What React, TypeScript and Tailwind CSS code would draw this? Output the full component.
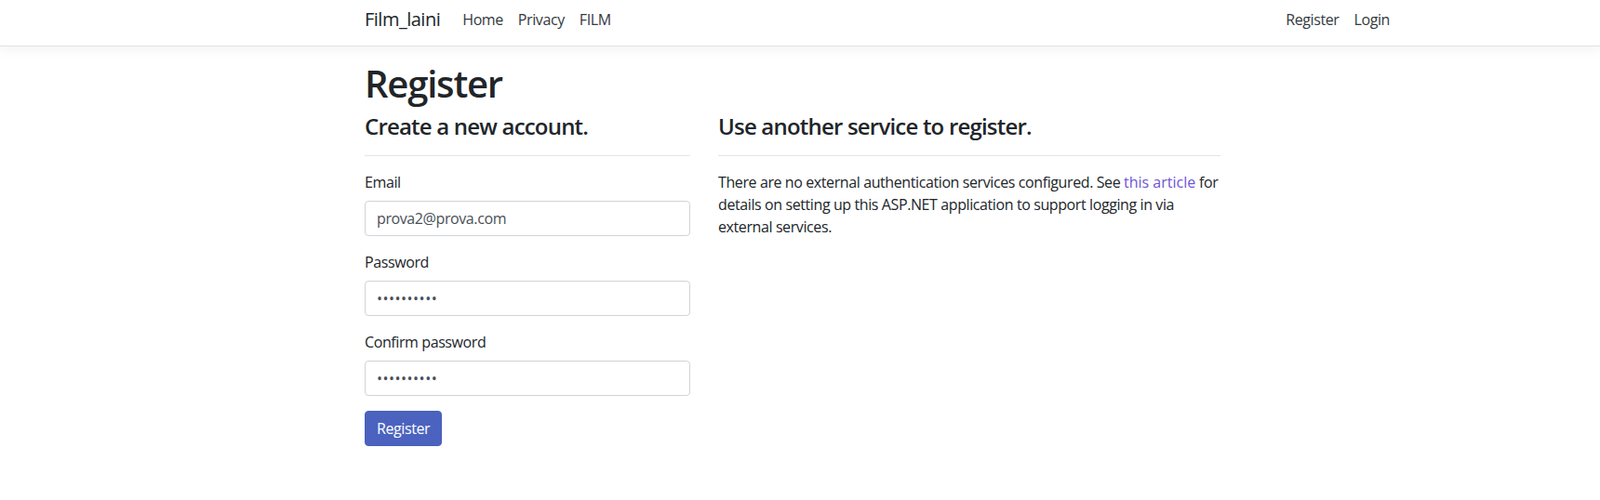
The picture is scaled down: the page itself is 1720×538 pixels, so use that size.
import React from "react";

const navLinks = ["Home", "Privacy", "FILM"];

function Field({ label, type, value }: { label: string; type: string; value: string }) {
  return (
    <div className="mb-4">
      <label className="mb-2 block leading-6">{label}</label>
      <input
        type={type}
        defaultValue={value}
        readOnly
        className={
          type === "password"
            ? "block h-[38px] w-full rounded-[4px] border border-[#ced4da] bg-white px-3 py-1.5 leading-6 tracking-[0.5px] text-[#495057] outline-none"
            : "block h-[38px] w-full rounded-[4px] border border-[#ced4da] bg-white px-3 py-1.5 leading-6 text-[#495057] outline-none"
        }
      />
    </div>
  );
}

export default function App() {
  return (
    <div className="min-h-[538px] bg-white font-['Open_Sans','Noto_Sans',sans-serif] text-base tracking-[-0.4px] text-[#212529]">
      {/* navbar — top few pixels are cropped in the reference */}
      <header className="mb-4 border-b border-[#e2e2e2] bg-white pb-2 pt-px shadow-[0_4px_12px_rgba(0,0,0,0.05)]">
        <div className="ml-[377px] flex w-[1140px] items-center px-[15px]">
          <a className="mr-4 py-[5px] text-[20px] leading-[30px] tracking-[-0.5px] text-[#212529]">Film_laini</a>
          <nav className="flex flex-1 items-center">
            {navLinks.map((l) => (
              <a key={l} className="px-2 py-2 leading-6 text-[#343a40]">
                {l}
              </a>
            ))}
          </nav>
          <nav className="flex items-center">
            <a className="px-2 py-2 leading-6 text-[#343a40]">Register</a>
            <a className="px-2 py-2 leading-6 text-[#343a40]">Login</a>
          </nav>
        </div>
      </header>

      <main className="ml-[377px] w-[1140px] px-[15px]">
        <h1 className="mb-2 text-[40px] font-semibold leading-[1.2] tracking-[-1.2px]">Register</h1>
        <div className="-mx-[15px] flex">
          <div className="w-[380px] px-[15px]">
            <h4 className="text-[24px] font-semibold leading-[1.2] tracking-[-0.8px]">Create a new account.</h4>
            <hr className="mb-4 mt-4 border-t border-black/10" />
            <Field label="Email" type="text" value="prova2@prova.com" />
            <Field label="Password" type="password" value="abcdefghij" />
            <Field label="Confirm password" type="password" value="abcdefghij" />
            <button className="h-[38px] rounded-[4px] border border-[#4760bb] bg-[#4b63bf] px-3 leading-6 text-white">
              Register
            </button>
          </div>
          <div className="w-[570px] px-[15px]">
            <h4 className="text-[24px] font-semibold leading-[1.2] tracking-[-0.8px]">Use another service to register.</h4>
            <hr className="mb-4 mt-4 border-t border-black/10" />
            <p className="leading-6">
              There are no external authentication services configured. See{" "}
              <a className="tracking-normal text-[#6f52d6]">this article</a>{" "}
              for details on setting up this ASP.NET application to support logging in via external services.
            </p>
          </div>
        </div>
      </main>
    </div>
  );
}
